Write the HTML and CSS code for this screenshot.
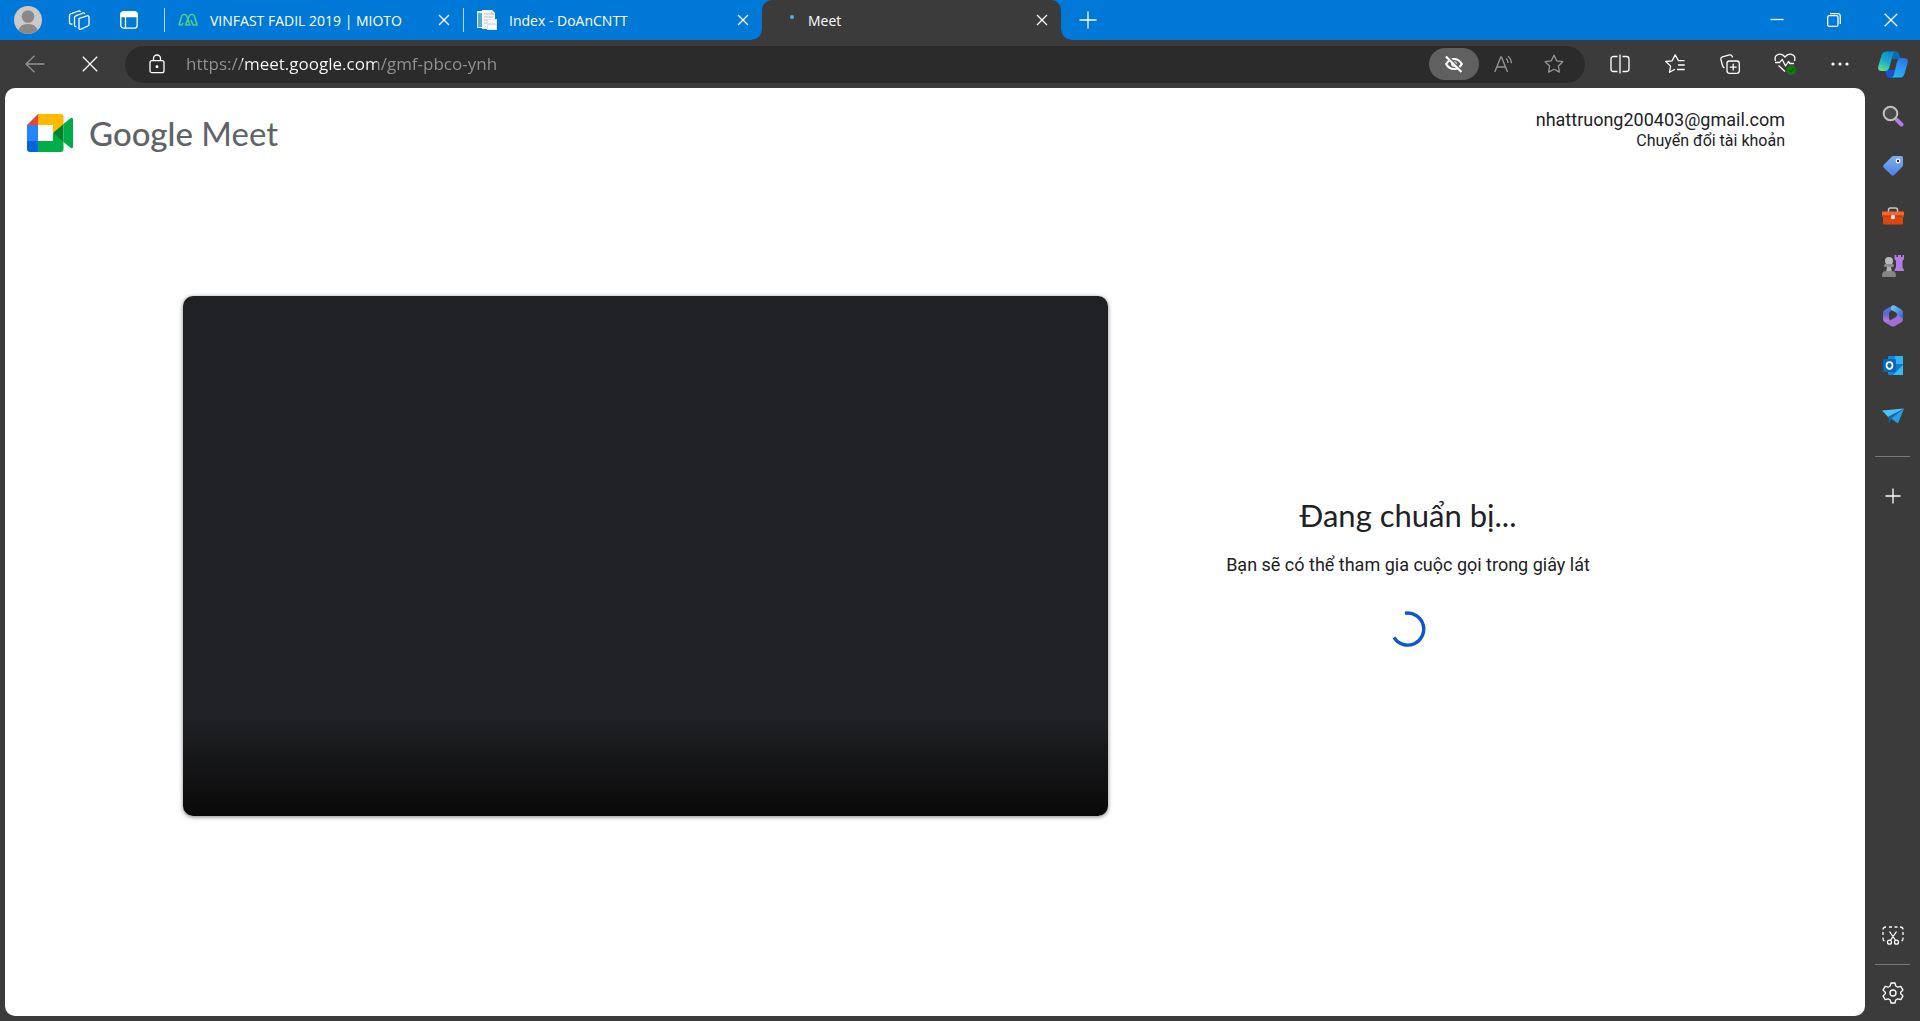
FILE: index.html
```html
<!DOCTYPE html>
<html lang="vi">
<head>
<meta charset="utf-8">
<meta name="viewport" content="width=device-width, initial-scale=1">
<title>Meet</title>
<link rel="stylesheet" href="styles.css">
</head>
<body>
<div class="browser">
  <header class="tabbar">
    <div class="tabbar-tools">
      <button class="avatar" aria-label="Profile">
        <svg width="28" height="28" viewBox="0 0 28 28"><defs><clipPath id="av"><circle cx="14" cy="14" r="14"/></clipPath></defs><g clip-path="url(#av)"><rect width="28" height="28" fill="#cbc9c7"/><circle cx="14" cy="10.500" r="6.300" fill="#8b8988"/><path d="M4 28c0-7 4-10 10-10s10 3 10 10z" fill="#8b8988"/></g></svg>
      </button>
      <button aria-label="Workspaces">
        <svg width="22" height="22" viewBox="0 0 22 22" class="line"><path d="M11 9.500l8-2.700q2-.5 2 1.500v7q0 1.200-1.200 1.700L13 20.200q-2 .8-2-1.300z"/><path d="M8.500 17.500Q6.500 18 6.500 16V8.500q0-1.200 1.200-1.700L15 4q1.500-.4 1.900 1M4.500 15Q1.500 15.500 1.500 13.500V6.500q0-1.300 1.200-1.700L10.500 2q1.500-.4 2 .8"/></svg>
      </button>
      <button aria-label="Tab actions">
        <svg width="18" height="18" viewBox="0 0 18 18" class="line"><rect x=".8" y=".8" width="16.400" height="16.400" rx="3"/><path d="M.8 5.500V3.500Q.8.800 3.500.800h11q2.700 0 2.700 2.700v2z" fill="#fff"/><path d="M5.500 6v11"/></svg>
      </button>
    </div>
    <div class="tabs" role="tablist">
      <div class="tab" role="tab" aria-selected="false">
        <svg class="favicon" width="20" height="20" viewBox="0 0 20 20" fill="none" stroke="#4fcb8d" stroke-width="1.600" stroke-linejoin="round"><path d="M1 15L3.500 6.500Q4 4.500 6 4.500h.5q1.700 0 2.300 1.800L12 15H7.500L11 6.300q.8-1.800 2.500-1.800h.5q2 0 2.500 2L19 15h-4L13 10M1 15h3l1-2"/></svg>
        <span class="tab-title">VINFAST FADIL 2019 | MIOTO</span>
        <button class="tab-close" aria-label="Close tab"><svg width="12" height="12" viewBox="0 0 12 12" class="line"><path d="M1 1l10 10M11 1L1 11"/></svg></button>
      </div>
      <div class="tab" role="tab" aria-selected="false">
        <svg class="favicon" width="20" height="20" viewBox="0 0 20 20"><path d="M0 1h6v17H0z" fill="#e8f3f8"/><path d="M1 3h4v14H1z" fill="#53abd3"/><path d="M5 0h10l3 3v16H5z" fill="#f5f5f4"/><path d="M7 4h7M7 7h9M7 10h3M7 13h3" stroke="#d0d3d5" stroke-width="1.500"/><path d="M10 9h10v11H10z" fill="#e3e3e3"/><path d="M11 10h8v3h-8zM11 15h8v4h-8z" fill="#fff"/><path d="M14 1l4 4h-4z" fill="#c8cbcd"/></svg>
        <span class="tab-title">Index - DoAnCNTT</span>
        <button class="tab-close" aria-label="Close tab"><svg width="12" height="12" viewBox="0 0 12 12" class="line"><path d="M1 1l10 10M11 1L1 11"/></svg></button>
      </div>
      <div class="tab active" role="tab" aria-selected="true">
        <svg class="favicon" width="20" height="20" viewBox="0 0 20 20"><circle cx="16" cy="7" r="2" fill="#5aa9e0"/></svg>
        <span class="tab-title">Meet</span>
        <button class="tab-close" aria-label="Close tab"><svg width="12" height="12" viewBox="0 0 12 12" class="line"><path d="M1 1l10 10M11 1L1 11"/></svg></button>
      </div>
    </div>
    <button class="new-tab" aria-label="New tab"><svg width="18" height="18" viewBox="0 0 18 18" class="line"><path d="M9 .5v17M.5 9h17"/></svg></button>
    <div class="window-controls">
      <button aria-label="Minimize"><svg width="14" height="14" viewBox="0 0 14 14" class="line"><path d="M.5 6.500h13"/></svg></button>
      <button aria-label="Restore"><svg width="14" height="14" viewBox="0 0 14 14" class="line"><rect x=".7" y="2.700" width="10.300" height="10.600" rx="1.500"/><path d="M3 .7h7.500q2.800 0 2.800 2.800V11"/></svg></button>
      <button aria-label="Close"><svg width="14" height="14" viewBox="0 0 14 14" class="line"><path d="M.7.700l12.600 12.600M13.300.700L.7 13.300"/></svg></button>
    </div>
  </header>

  <div class="toolbar">
    <button class="back" aria-label="Back" disabled><svg width="20" height="18" viewBox="0 0 20 18" class="line"><path d="M19.500 9H1M9.500.8L1 9l8.500 8.200"/></svg></button>
    <button aria-label="Stop"><svg width="16" height="16" viewBox="0 0 16 16" class="line"><path d="M.8.800l14.400 14.400M15.200.800L.8 15.200"/></svg></button>
    <div class="address">
      <button class="lock" aria-label="Site information"><svg width="16" height="20" viewBox="0 0 16 20" class="line"><rect x="1" y="6.700" width="14" height="12" rx="2"/><path d="M4.500 6.500V4.500a3.500 3.500 0 0 1 7 0v2"/><circle cx="8" cy="12.700" r=".8" fill="#fff"/></svg></button>
      <input class="url" type="text" aria-label="Address" value="https://meet.google.com/gmf-pbco-ynh" spellcheck="false">
      <button class="tracking" aria-label="Tracking prevention"><svg width="18" height="18" viewBox="0 0 18 18" fill="none" stroke="#fff"><path d="M1.200 9Q4 4 9 4t7.800 5Q14 14 9 14T1.200 9z" stroke-width="2.200"/><circle cx="9" cy="9" r="2.800" fill="#fff" stroke="none"/><path d="M2.300.500l14.500 15.500" stroke="#606060" stroke-width="2"/><path d="M1 1.500L16.500 17" stroke-width="2.200"/></svg></button>
      <button class="dim" aria-label="Read aloud"><svg width="20" height="18" viewBox="0 0 20 18" class="line"><path d="M.8 17L6.800 2h.7l6 15M3 12h8.300M12 3.500q2 1.500 2 4.500M14 1.200q3.300 2.300 3.300 7"/></svg></button>
      <button class="dim" aria-label="Add to favorites"><svg width="20" height="20" viewBox="0 0 20 20" class="line"><path d="M10 1.200l2.700 5.600 6.100.9-4.400 4.300 1 6.100L10 15.200l-5.400 2.900 1-6.100L1.200 7.700l6.100-.9z"/></svg></button>
    </div>
    <div class="actions">
      <button aria-label="Split screen"><svg width="20" height="20" viewBox="0 0 20 20" class="line"><path d="M7.500 2.500h-4q-2.500 0-2.500 2.500v10q0 2.500 2.500 2.500h4M12.500 2.500h4Q19 2.500 19 5v10q0 2.500-2.500 2.500h-4M10 .5v19"/></svg></button>
      <button aria-label="Favorites"><svg width="20" height="20" viewBox="0 0 20 20" class="line"><path d="M19.500 6.700h-6L10.200.9 7.100 6.800l-6.300.7 4.800 4.600-1.100 6.200L10 15.300M13 11h6.700M12 15.500h7.700"/></svg></button>
      <button aria-label="Collections"><svg width="20" height="20" viewBox="0 0 20 20" class="line"><rect x="7" y="7" width="12.300" height="12.300" rx="2.500"/><path d="M13.200 9.800v6.800M9.800 13.200h6.800M4.500 14Q3 13.500 2.500 11.500L.9 5.500Q.5 3.500 2.400 2.800l7-1.900q2-.5 2.800 1.400l.3 1.200"/></svg></button>
      <button aria-label="Browser essentials"><svg width="22" height="22" viewBox="0 0 22 22" class="line"><path d="M1.500 8Q0 2.500 4.500 1.300 8.500.500 11 4q2.500-3.500 6.500-2.700Q22 2.500 20.500 8M1 9.500h4.500l2.800-3 3.200 6.500 3-4.500 1.500 2h4M4.500 12.500l6.500 6"/><circle cx="17.200" cy="17.200" r="4.800" fill="#107c10" stroke="none"/><path d="M15 17.200l1.700 1.600 3-3" style="stroke:#064b08"/></svg></button>
      <button aria-label="More"><svg width="18" height="4" viewBox="0 0 18 4" fill="#fff"><circle cx="2" cy="2" r="1.600"/><circle cx="9" cy="2" r="1.600"/><circle cx="16" cy="2" r="1.600"/></svg></button>
    </div>
    <button class="copilot" aria-label="Copilot"><svg width="30" height="27" viewBox="0 0 30 27"><defs><linearGradient id="cp1" x1=".7" y1="0" x2=".2" y2="1"><stop offset="0" stop-color="#078ad3"/><stop offset=".5" stop-color="#1ba9c9"/><stop offset="1" stop-color="#6ae08a"/></linearGradient><linearGradient id="cp2" x1=".7" y1="0" x2=".3" y2="1"><stop offset="0" stop-color="#2a70e0"/><stop offset=".4" stop-color="#3290f1"/><stop offset="1" stop-color="#1fb8f5"/></linearGradient></defs><path d="M7 19h10l-3 8h-2q-3 0-4-4z" fill="#1752d8"/><path d="M14 .5h4q2.500 0 3.500 3.500L23 8h-9z" fill="#086cb0"/><path d="M8 .5h10q-2 0-3 3L11.500 16q-1 4-4.500 4H4q-5 0-3.600-5L3.500 4.500Q4.600.500 8 .5z" fill="url(#cp1)"/><path d="M22.500 26.500H13q2 0 3-3.500L19 11q1-4 4.500-4H26q5 0 3.600 5l-3 10.500q-1.100 4-4.100 4z" fill="url(#cp2)"/></svg></button>
  </div>

  <div class="content">
    <main class="page">
      <div class="meet-header">
        <a class="brand" href="#" aria-label="Google Meet">
          <svg width="46" height="38" viewBox="0 0 46 38"><path d="M0 11h11v16H0z" fill="#2684fc"/><path d="M11 0v11H0z" fill="#ea4335"/><path d="M0 27h11v11H3q-3 0-3-3z" fill="#0066da"/><path d="M11 0h22.500Q36.500 0 36.500 3v9L26 19v-8H11z" fill="#ffba00"/><path d="M11 27h15v-8l10.500 7v9q0 3-3 3H11z" fill="#00ac47"/><path d="M26 19l10.500-9v17.500z" fill="#00832d"/><path d="M36.500 10L43.500 4.300Q46 2.700 46 5.500v27q0 2.700-2.500 1.200l-7-5.700z" fill="#00ac47"/></svg>
          <span class="brand-name"><span class="brand-google">Google</span> Meet</span>
        </a>
        <div class="account">
          <span class="email">nhattruong200403@gmail.com</span>
          <a class="switch" href="#">Chuyển đổi tài khoản</a>
        </div>
      </div>
      <div class="stage">
        <div class="preview"></div>
        <section class="status">
          <h1>Đang chuẩn bị...</h1>
          <p>Bạn sẽ có thể tham gia cuộc gọi trong giây lát</p>
          <svg class="spinner" width="36" height="36" viewBox="0 0 36 36" role="img" aria-label="Loading"><path d="M15 2.300A16 16 0 1 1 4 26.300" fill="none" stroke="#0b57d0" stroke-width="3.400"/></svg>
        </section>
      </div>
    </main>
    <aside class="sidebar">
      <button aria-label="Search"><svg width="22" height="22" viewBox="0 0 22 22"><path d="M15 15l4.500 4.500" stroke="#b47be8" stroke-width="4" stroke-linecap="round"/><path d="M13 13l2.500 2.500" stroke="#999" stroke-width="2"/><circle cx="8.500" cy="8.500" r="6.800" fill="#4a4a4a" stroke="#c0c0c0" stroke-width="2"/></svg></button>
      <button aria-label="Shopping"><svg width="22" height="22" viewBox="0 0 22 22"><defs><linearGradient id="tg" x2="0" y2="1"><stop stop-color="#7db0f4"/><stop offset="1" stop-color="#4f80db"/></linearGradient></defs><path d="M11.500 1H19q2 0 2 2v7q0 1-.7 1.800l-8 8.200q-1.500 1.500-3 0l-7.500-7.200q-1.400-1.500 0-3L9.500 2q.8-1 2-1z" fill="url(#tg)"/><circle cx="16" cy="6" r="1.800" fill="#333" stroke="#fff" stroke-width="1.200"/></svg></button>
      <button aria-label="Tools"><svg width="22" height="18" viewBox="0 0 22 18"><path d="M6.500 5V3q0-2 2-2h5q2 0 2 2v2" fill="none" stroke="#c8c8c8" stroke-width="1.500"/><path d="M0 5.500q0-1 1-1h20q1 0 1 1V10H0z" fill="#f4672c"/><path d="M1 9h20v7q0 1.500-1.500 1.500h-17Q1 17.500 1 16z" fill="#dc4711"/><path d="M0 9h22" stroke="#a93708"/><circle cx="11" cy="10" r="2.200" fill="#ddd"/></svg></button>
      <button aria-label="Games"><svg width="22" height="24" viewBox="0 0 22 24"><path d="M12.500 1h2v2H16V1h3v2h1.500V1H22v4l-1.500 2v6L22 16v1H12.500v-1l1.500-3V7l-1.500-2z" fill="#b47be5"/><circle cx="7" cy="7" r="4" fill="#b9b9b9"/><path d="M2 11.500q0-1.500 1.500-1.500h7q1.500 0 1.500 1.500T10.500 13h-7Q2 13 2 11.500z" fill="#8d8d8d"/><path d="M5 13h4l1 5H4z" fill="#b0b0b0"/><path d="M0 22q0-5 4-5h6q4 0 4 5 0 1-1 1H1q-1 0-1-1z" fill="#858585"/></svg></button>
      <button aria-label="Microsoft 365"><svg width="22" height="22" viewBox="0 0 22 22"><defs><linearGradient id="m1" x2="0" y2="1"><stop stop-color="#3f7fe0"/><stop offset=".5" stop-color="#6a63cc"/><stop offset="1" stop-color="#c58ae8"/></linearGradient><linearGradient id="m2" x2="1" y2="1"><stop stop-color="#76d6f7"/><stop offset="1" stop-color="#3158c9"/></linearGradient></defs><path d="M10.500.500L3 4.700Q1 5.800 1 8v6q0 2.200 2 3.200l2 1 3-3.200q-1-.5-1-2V8.500Q7 7 8.300 6.200L14 3z" fill="url(#m1)"/><path d="M10.500.500Q12 0 13.500 1L19 4.200q2 1.200 2 3.300v7l-6-3V9.500q0-1.500-1.500-2.300L9 4.700q-.5-3 1.500-4.200z" fill="url(#m2)"/><path d="M1.500 15.500q4 1.500 7-.5l5-2.700q1.500-.8 1.500-2.500l4.500 2.700q1.500 1 1.500 2 0 1.800-2 3L13 21q-2 1-4 0l-5.500-3.200Q2 17 1.500 15.500z" fill="#9e70d6"/></svg></button>
      <button aria-label="Outlook"><svg width="22" height="22" viewBox="0 0 22 22"><rect x="6" y="1" width="15" height="19" rx="1" fill="#1688d8"/><path d="M13 1h8v8h-8z" fill="#2fb4f2"/><path d="M13 9h8v11H10z" fill="#117bc7"/><path d="M21 10v10H11z" fill="#35bdf5"/><rect x="1" y="4" width="13" height="13" rx="1.200" fill="#0867bd"/><ellipse cx="7.500" cy="10.500" rx="3" ry="3.300" fill="none" stroke="#fff" stroke-width="1.700"/></svg></button>
      <button aria-label="Drop"><svg width="22" height="18" viewBox="0 0 22 18"><path d="M0 3.500L22 1.500 6.500 10.500z" fill="#4cc3f3"/><path d="M6.500 9.500L22 1.500 9 12l-2 5z" fill="#0869b9"/><path d="M9 11.500L22 1.500l-6 15z" fill="#2a9fe0"/></svg></button>
      <hr>
      <button class="add" aria-label="Add"><svg width="16" height="16" viewBox="0 0 16 16" class="line"><path d="M8 .5v15M.5 8h15"/></svg></button>
      <div class="spacer"></div>
      <button aria-label="Screenshot"><svg width="22" height="22" viewBox="0 0 22 22" class="line"><path d="M2.500 16Q1 15.500 1 13.500v-1M1 10V7M1 4.500Q1 2 4 2M7 2h3M12.500 2h3M18 2q3 0 3 2.500M21 7v3M21 12.500v1q0 2-1.500 2.500M7.500 6.500l6.200 9M14.500 6.500l-6.200 9"/><circle cx="7.500" cy="17.200" r="2"/><circle cx="14.500" cy="17.200" r="2"/></svg></button>
      <hr class="lower">
      <button aria-label="Settings"><svg width="22" height="22" viewBox="0 0 22 22" class="line"><circle cx="11" cy="11" r="3"/><path d="M9 1h4l.8 3 2 1.200 3-.9 2.200 3.800-2.300 2.200v1.400l2.300 2.200-2.200 3.800-3-.9-2 1.200-.8 3H9l-.8-3-2-1.200-3 .9L1 13.900l2.300-2.200v-1.400L1 8.100l2.200-3.800 3 .9 2-1.200z"/></svg></button>
    </aside>
  </div>
</div>
</body>
</html>
```

FILE: styles.css
```css
* { box-sizing: border-box; }

body {
  margin: 0;
  font-family: "Open Sans", "Noto Sans", sans-serif;
  background: #3b3b3b;
}

button {
  display: flex;
  align-items: center;
  justify-content: center;
  padding: 0;
  border: 0;
  background: none;
  color: inherit;
}

a { color: inherit; text-decoration: none; }

svg { display: block; flex: none; }

.line {
  fill: none;
  stroke: #fff;
  stroke-width: 1.3;
  stroke-linejoin: round;
}

.browser {
  display: flex;
  flex-direction: column;
  min-height: 100vh;
}

/* Tab strip */
.tabbar {
  display: flex;
  height: 40px;
  background: #0078d7;
  color: #fff;
}

.tabbar-tools {
  display: flex;
  align-items: center;
  width: 164px;
  padding-left: 14px;
  gap: 24px;
}

.tabbar-tools button { height: 28px; min-width: 26px; }

.tabs { display: flex; }

.tab {
  position: relative;
  display: flex;
  align-items: center;
  width: 299px;
  padding: 0 12px 0 14px;
  gap: 12px;
  font-size: 14px;
}

.tab:not(.active)::before {
  content: "";
  position: absolute;
  left: 0;
  top: 8px;
  width: 1px;
  height: 24px;
  background: #b5d8f4;
}

.tab.active {
  border-radius: 10px 10px 0 0;
  background: #3b3b3b;
}

.tab.active::before,
.tab.active::after {
  content: "";
  position: absolute;
  bottom: 0;
  width: 10px;
  height: 10px;
}

.tab.active::before {
  right: 100%;
  background: radial-gradient(circle at 0 0, #0078d7 9px, #3b3b3b 10px);
}

.tab.active::after {
  left: 100%;
  background: radial-gradient(circle at 100% 0, #0078d7 9px, #3b3b3b 10px);
}

.tab-title { flex: 1; white-space: nowrap; }

.tab-close { width: 14px; height: 24px; }

.new-tab { width: 54px; }

.window-controls { display: flex; margin-left: auto; padding-right: 1px; }

.window-controls button { width: 57px; }

/* Address row */
.toolbar {
  display: flex;
  align-items: center;
  height: 48px;
  padding: 0 12px 0 7px;
}

.toolbar > button { width: 55px; height: 40px; }

.back { opacity: .45; }

.address {
  display: flex;
  align-items: center;
  flex: 1;
  height: 37px;
  margin-left: 8px;
  padding: 0 6px 0 14px;
  border-radius: 19px;
  background: #2b2b2b;
}

.address button { width: 50px; height: 32px; }

.address .lock { width: 36px; }

.url {
  flex: 1;
  min-width: 0;
  height: 32px;
  margin-left: 11px;
  padding: 0 0 2px;
  border: 0;
  outline: 0;
  background: linear-gradient(90deg, #939393 56px, #fff 56px, #fff 191px, #939393 191px);
  background-clip: text;
  color: transparent;
  font-family: inherit;
  font-size: 17px;
}

.address .tracking {
  border-radius: 16px;
  background: #606060;
}

.dim { opacity: .5; }

.actions { display: flex; margin-left: 7px; }

.actions button { width: 55px; height: 40px; }

.toolbar > .copilot { width: 30px; margin-left: 11px; }

/* Page and side bar */
.content { display: flex; flex: 1; }

.page {
  display: flex;
  flex-direction: column;
  flex: 1;
  margin: 0 0 5px 5px;
  border-radius: 10px;
  background: #fff;
  color: #202124;
  font-family: Roboto, sans-serif;
}

.meet-header {
  display: flex;
  justify-content: space-between;
  height: 92px;
  padding: 20px 80px 0 22px;
}

.brand {
  display: flex;
  align-items: center;
  height: 50px;
  gap: 16px;
}

.brand-name {
  color: #5f6368;
  font-family: Lato, sans-serif;
  font-size: 33px;
  line-height: 40px;
}

.brand-google { font-weight: 500; }

.account {
  display: flex;
  flex-direction: column;
  align-items: flex-end;
  line-height: 20px;
}

.email { font-size: 18px; line-height: 24px; }

.switch { font-size: 16px; line-height: 18px; }

.stage {
  display: grid;
  grid-template-columns: minmax(0, 925fr) minmax(0, 560fr);
  align-items: center;
  gap: 20px;
  flex: 1;
  padding: 0 177px 84px 178px;
}

.preview {
  aspect-ratio: 16 / 9;
  border-radius: 10px;
  background: linear-gradient(0deg, #090909, #202124 100px);
  box-shadow: 0 1px 4px rgba(0, 0, 0, .5);
}

.status {
  display: flex;
  flex-direction: column;
  align-items: center;
  padding-top: 30px;
  text-align: center;
}

.status h1 {
  margin: 0;
  font-family: Lato, sans-serif;
  font-size: 31px;
  font-weight: 400;
  line-height: 40px;
}

.status p { margin: 18px 0 34px; font-size: 18px; line-height: 24px; }

.sidebar {
  display: flex;
  flex-direction: column;
  align-items: center;
  width: 55px;
  padding: 3px 0 3px;
}

.sidebar button { width: 50px; height: 50px; flex: none; }

.sidebar hr {
  width: 35px;
  height: 1px;
  margin: 15px 0 14px;
  border: 0;
  background: #777;
}

.sidebar .lower { margin: 3px 0; }

.spacer { flex: 1; }
```
